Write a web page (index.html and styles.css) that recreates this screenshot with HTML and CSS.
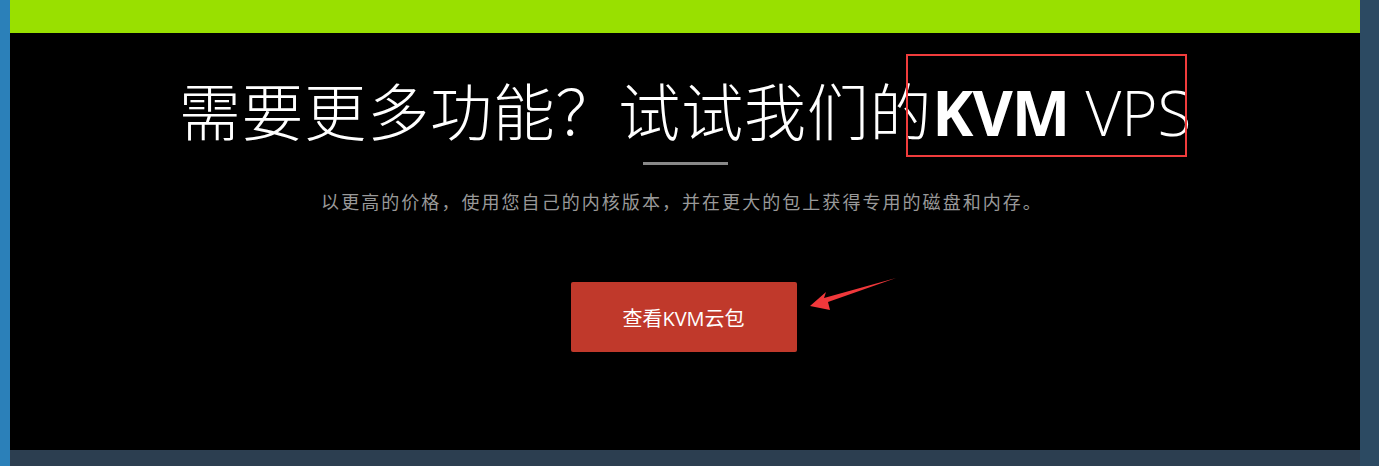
FILE: index.html
```html
<!DOCTYPE html>
<html lang="zh-CN">
<head>
<meta charset="utf-8">
<title>KVM VPS</title>
<link rel="stylesheet" href="styles.css">
</head>
<body>
<div class="page">
  <div class="side-left"></div>
  <div class="main">
    <div class="topbar"></div>
    <section class="hero">
      <h1 class="title"><span class="cjk">需要更多功能？试试我们的</span><b class="kvm">KVM</b> VPS</h1>
      <div class="divider"></div>
      <p class="subtitle">以更高的价格，使用您自己的内核版本，并在更大的包上获得专用的磁盘和内存。</p>
      <a class="btn" href="#">查看KVM云包</a>
    </section>
    <div class="bottombar"></div>
  </div>
  <div class="side-right"></div>
  <div class="mark-box"></div>
  <svg class="mark-arrow" width="100" height="40" viewBox="800 272 100 40" xmlns="http://www.w3.org/2000/svg">
    <polygon points="810,306 826,292 824,298 896,278 828,302 830,310" fill="#f0383b"/>
  </svg>
</div>
</body>
</html>
```

FILE: styles.css
```css
html, body {
  margin: 0;
  padding: 0;
  background: #000;
}
.page {
  position: relative;
  display: flex;
  width: 1379px;
  height: 466px;
  overflow: hidden;
}
.side-left {
  width: 10px;
  flex: none;
  background: #2b80b9;
}
.side-right {
  width: 19px;
  flex: none;
  background: #2c4a62;
}
.main {
  width: 1350px;
  flex: none;
  display: flex;
  flex-direction: column;
}
.topbar {
  height: 33px;
  background: #99e000;
  flex: none;
}
.hero {
  height: 417px;
  flex: none;
  background: #000;
  display: flex;
  flex-direction: column;
  align-items: center;
}
.bottombar {
  height: 16px;
  flex: none;
  background: #2c3e50;
}
.title {
  margin: 42px 0 0;
  font-family: "Open Sans", "Noto Sans CJK SC", sans-serif;
  font-weight: 300;
  font-size: 62px;
  line-height: 74px;
  color: #fff;
  white-space: nowrap;
}
.cjk {
  letter-spacing: 0.8px;
}
.kvm {
  font-weight: 700;
  letter-spacing: -1px;
}
.divider {
  margin-top: 13px;
  width: 85px;
  height: 3px;
  background: #888;
}
.subtitle {
  margin: 24px 6px 0 0;
  font-family: "Noto Sans CJK SC", sans-serif;
  font-size: 18px;
  letter-spacing: 2.05px;
  line-height: 24px;
  color: #999;
  white-space: nowrap;
}
.btn {
  margin-top: 69px;
  margin-right: 3px;
  width: 226px;
  height: 70px;
  display: flex;
  align-items: center;
  justify-content: center;
  background: #c0392b;
  border-radius: 2px;
  color: #fff;
  font-family: "Open Sans", "Noto Sans CJK SC", sans-serif;
  font-size: 20px;
  text-decoration: none;
}
.mark-box {
  position: absolute;
  left: 906px;
  top: 54px;
  width: 277px;
  height: 99px;
  border: 2px solid #f03c3c;
}
.mark-arrow {
  position: absolute;
  left: 800px;
  top: 272px;
}
```
